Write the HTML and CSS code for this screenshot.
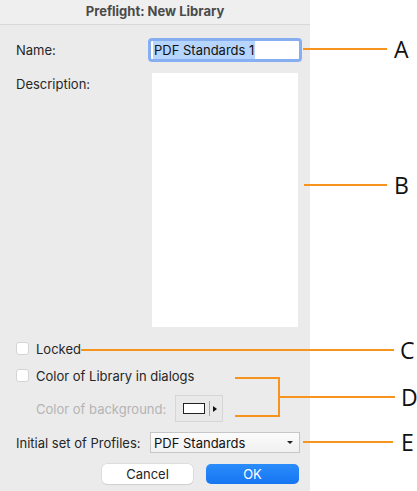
FILE: index.html
```html
<!DOCTYPE html>
<html>
<head>
<meta charset="utf-8">
<link rel="stylesheet" href="styles.css">
</head>
<body>
<div class="page">
  <div class="dialog">
    <div class="titlebar">Preflight: New Library</div>
    <div class="form">
      <div class="row row-name">
        <span class="label w-name">Name:</span>
        <div class="field"><span class="sel">PDF Standards 1</span></div>
      </div>
      <div class="row row-desc">
        <span class="label w-desc">Description:</span>
        <div class="textarea"></div>
      </div>
      <div class="row row-check row-locked">
        <span class="checkbox"></span>
        <span class="label">Locked</span>
      </div>
      <div class="row row-check row-color">
        <span class="checkbox"></span>
        <span class="label">Color of Library in dialogs</span>
      </div>
      <div class="row row-bg">
        <span class="label disabled w-bg">Color of background:</span>
        <div class="well">
          <span class="swatch"></span>
          <span class="well-sep"></span>
          <span class="well-arrow"></span>
        </div>
      </div>
      <div class="row row-prof">
        <span class="label w-prof">Initial set of Profiles:</span>
        <div class="popup"><span>PDF Standards</span><span class="popup-arrow"></span></div>
      </div>
      <div class="row row-buttons">
        <div class="btn btn-cancel">Cancel</div>
        <div class="btn btn-ok">OK</div>
      </div>
    </div>
  </div>

  <div class="callouts">
    <div class="callout c-a"><span class="line l-a"></span><span class="letter">A</span></div>
    <div class="callout c-b"><span class="line l-b"></span><span class="letter">B</span></div>
    <div class="callout c-c"><span class="line l-c"></span><span class="letter">C</span></div>
    <div class="bracket"></div>
    <div class="callout c-d"><span class="line l-d"></span><span class="letter">D</span></div>
    <div class="callout c-e"><span class="line l-e"></span><span class="letter">E</span></div>
  </div>
</div>
</body>
</html>
```

FILE: styles.css
```css
html, body {
  margin: 0;
  padding: 0;
  background: #ffffff;
}

.page {
  position: relative;
  width: 417px;
  height: 491px;
  overflow: hidden;
  font-family: Inter, "Liberation Sans", Arial, sans-serif;
  font-size: 13px;
  color: #262626;
}

.dialog {
  width: 310px;
  height: 491px;
  background: #ebebeb;
}

.titlebar {
  height: 25px;
  box-sizing: border-box;
  border-bottom: 1px solid #d8d8d8;
  background: #efefef;
  text-align: center;
  font-weight: 700;
  font-size: 13px;
  line-height: 23px;
  color: #4a4a4a;
}

.form {
  padding-left: 16px;
}

.row {
  display: flex;
  align-items: center;
}

.label {
  flex: none;
  line-height: 16px;
}

.label.disabled {
  color: #b4b4b4;
}

.w-name { width: 132px; }
.w-desc { width: 136px; }
.w-bg { width: 159px; padding-left: 20px; box-sizing: border-box; }
.w-prof { width: 134px; }

.row-name {
  margin-top: 13px;
  height: 24px;
}

.field {
  width: 154px;
  height: 24px;
  box-sizing: border-box;
  border: 3px solid #86aef0;
  border-radius: 4px;
  background: #ffffff;
  display: flex;
  align-items: center;
  padding-left: 2px;
  color: #111;
}

.sel {
  background: #b5d5fd;
  line-height: 18px;
  padding: 0 1px;
}

.row-desc {
  margin-top: 11px;
  align-items: flex-start;
}

.row-desc .label {
  padding-top: 3px;
}

.textarea {
  width: 146px;
  height: 254px;
  background: #ffffff;
}

.row-check .label {
  margin-left: 7px;
}

.checkbox {
  flex: none;
  width: 13px;
  height: 13px;
  box-sizing: border-box;
  border: 1px solid #d4d4d4;
  border-radius: 3px;
  background: #ffffff;
}

.row-locked {
  margin-top: 15px;
  height: 13px;
}

.row-color {
  margin-top: 14px;
  height: 13px;
}

.row-bg {
  margin-top: 13px;
  height: 27px;
}

.well {
  width: 48px;
  height: 27px;
  box-sizing: border-box;
  border: 1px solid #d6d6d6;
  background: #e9e9e9;
  display: flex;
  align-items: center;
  padding-left: 7px;
}

.swatch {
  width: 22px;
  height: 11px;
  box-sizing: border-box;
  border: 1px solid #222;
  background: #fff;
}

.well-sep {
  width: 1px;
  height: 15px;
  background: #a8a8a8;
  margin-left: 4px;
}

.well-arrow {
  width: 0;
  height: 0;
  border-top: 3px solid transparent;
  border-bottom: 3px solid transparent;
  border-left: 4px solid #111;
  margin-left: 3px;
}

.row-prof {
  margin-top: 10px;
  height: 21px;
}

.popup {
  width: 150px;
  height: 21px;
  box-sizing: border-box;
  border: 1px solid #c6c6c6;
  background: linear-gradient(#fbfbfb, #f1f1f1);
  display: flex;
  align-items: center;
  justify-content: space-between;
  padding: 0 6px 0 3px;
  color: #111;
}

.popup-arrow {
  width: 0;
  height: 0;
  border-left: 3px solid transparent;
  border-right: 3px solid transparent;
  border-top: 3px solid #222;
}

.row-buttons {
  margin-top: 11px;
  padding-left: 86px;
  gap: 13px;
}

.btn {
  height: 20px;
  border-radius: 5px;
  display: flex;
  align-items: center;
  justify-content: center;
  font-size: 13px;
}

.btn-cancel {
  width: 91px;
  background: #ffffff;
  box-shadow: 0 0 0 0.5px #d0d0d0, 0 1px 1px rgba(0,0,0,0.12);
  color: #262626;
}

.btn-ok {
  width: 93px;
  background: linear-gradient(#2b8cfb, #1675f2);
  color: #ffffff;
}

/* callout annotations overlaid on the screenshot */
.callouts {
  position: absolute;
  left: 0;
  top: 0;
  width: 417px;
  height: 491px;
  pointer-events: none;
}

.callout {
  position: absolute;
  display: flex;
  align-items: center;
  height: 24px;
}

.line {
  height: 2px;
  background: #f7941d;
}

.letter {
  font-family: "Open Sans", "Liberation Sans", sans-serif;
  font-size: 23px;
  line-height: 24px;
  color: #111;
}

.c-a { left: 303px; top: 37px; }
.l-a { width: 84px; margin-right: 7px; }

.c-b { left: 304px; top: 173px; }
.l-b { width: 83px; margin-right: 7px; }

.c-c { left: 81px; top: 338px; }
.l-c { width: 313px; margin-right: 6px; }

.c-d { left: 280px; top: 385px; }
.l-d { width: 115px; margin-right: 6px; }

.c-e { left: 303px; top: 430px; }
.l-e { width: 90px; margin-right: 8px; }

.bracket {
  position: absolute;
  left: 235px;
  top: 377px;
  width: 43px;
  height: 36px;
  border: 2px solid #f7941d;
  border-left: none;
}
```
